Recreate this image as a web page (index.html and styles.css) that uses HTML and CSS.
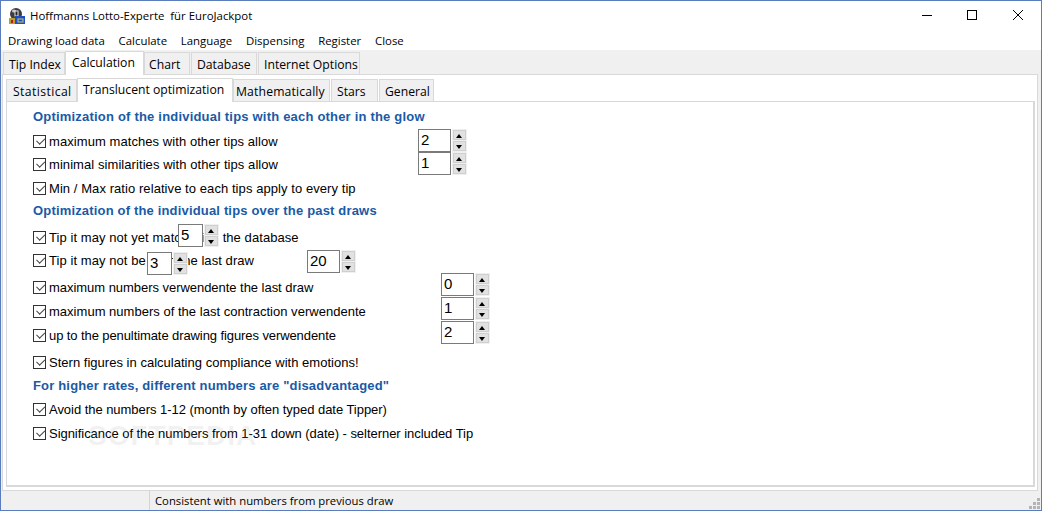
FILE: index.html
```html
<!DOCTYPE html>
<html lang="en">
<head>
<meta charset="utf-8">
<title>Hoffmanns Lotto-Experte für EuroJackpot</title>
<link rel="stylesheet" href="styles.css">
</head>
<body>
<div class="window">
  <header class="titlebar">
    <svg class="app-icon" width="16" height="16" viewBox="0 0 16 16">
      <circle cx="7" cy="6" r="6" fill="#3c3c44"/>
      <ellipse cx="5" cy="3" rx="2" ry="1.5" fill="#c8c8c8"/>
      <rect x="5.5" y="2.5" width="4" height="6" fill="#e8e8e8"/>
      <rect x="6.5" y="3.5" width="2" height="4" fill="#222"/>
      <rect x="0" y="10" width="7" height="6" fill="#b8a030"/>
      <rect x="2" y="12" width="2" height="3" fill="#b02020"/>
      <rect x="6" y="8" width="10" height="8" fill="#1c4fc8"/>
      <rect x="9" y="11" width="5" height="3" fill="none" stroke="#d8c850"/>
    </svg>
    <span class="title">Hoffmanns Lotto-Experte&nbsp; für EuroJackpot</span>
    <div class="caption-buttons">
      <svg width="10" height="10" viewBox="0 0 10 10"><path d="M0 5.5H10" stroke="#000"/></svg>
      <svg width="10" height="10" viewBox="0 0 10 10"><rect x=".5" y=".5" width="9" height="9" fill="none" stroke="#000"/></svg>
      <svg class="close-icon" width="10" height="10" viewBox="0 0 10 10"><path d="M0 0L10 10M10 0L0 10" stroke="#000" stroke-width="1"/></svg>
    </div>
  </header>
  <nav class="menu">
    <span>Drawing load data</span><span>Calculate</span><span>Language</span><span>Dispensing</span><span>Register</span><span>Close</span>
  </nav>
  <div class="client">
    <div class="tabs outer-tabs">
      <span class="tab t-index">Tip Index</span>
      <span class="tab active t-calc">Calculation</span>
      <span class="tab t-chart">Chart</span>
      <span class="tab t-db">Database</span>
      <span class="tab t-net">Internet Options</span>
    </div>
    <div class="page">
      <div class="tabs inner-tabs">
        <span class="tab t-stat">Statistical</span>
        <span class="tab active t-trans">Translucent optimization</span>
        <span class="tab t-math">Mathematically</span>
        <span class="tab t-stars">Stars</span>
        <span class="tab t-gen">General</span>
      </div>
      <main class="panel">
        <div class="watermark">SOFTPEDIA</div>
        <h2 class="heading first">Optimization of the individual tips with each other in the glow</h2>
        <label class="row g4 loose"><span class="check"></span>maximum matches with other tips allow</label>
        <label class="row g3 loose"><span class="check"></span>minimal similarities with other tips allow</label>
        <label class="row g4 loose"><span class="check"></span>Min / Max ratio relative to each tips apply to every tip</label>
        <h2 class="heading g3">Optimization of the individual tips over the past draws</h2>
        <label class="row g6 loose"><span class="check"></span>Tip it may not yet match with&nbsp; the database</label>
        <label class="row g3 loose"><span class="check"></span>Tip it may not be from the last draw</label>
        <label class="row g7 tight"><span class="check"></span>maximum numbers verwendente the last draw</label>
        <label class="row g4"><span class="check"></span>maximum numbers of the last contraction verwendente</label>
        <label class="row g4 tighter"><span class="check"></span>up to the penultimate drawing figures verwendente</label>
        <label class="row g7"><span class="check"></span>Stern figures in calculating compliance with emotions!</label>
        <h2 class="heading g4">For higher rates, different numbers are "disadvantaged"</h2>
        <label class="row g3 tight"><span class="check"></span>Avoid the numbers 1-12 (month by often typed date Tipper)</label>
        <label class="row g4 tight"><span class="check"></span>Significance of the numbers from 1-31 down (date) - selterner included Tip</label>

        <div class="spin wide s1"><span class="value">2</span><span class="arrows"><i class="up"></i><i class="down"></i></span></div>
        <div class="spin wide s2"><span class="value">1</span><span class="arrows"><i class="up"></i><i class="down"></i></span></div>
        <div class="spin s3"><span class="value">5</span><span class="arrows"><i class="up"></i><i class="down"></i></span></div>
        <div class="spin s4"><span class="value">3</span><span class="arrows"><i class="up"></i><i class="down"></i></span></div>
        <div class="spin wide s5"><span class="value">20</span><span class="arrows"><i class="up"></i><i class="down"></i></span></div>
        <div class="spin wide s6"><span class="value">0</span><span class="arrows"><i class="up"></i><i class="down"></i></span></div>
        <div class="spin wide s7"><span class="value">1</span><span class="arrows"><i class="up"></i><i class="down"></i></span></div>
        <div class="spin wide s8"><span class="value">2</span><span class="arrows"><i class="up"></i><i class="down"></i></span></div>
      </main>
    </div>
    <footer class="status">
      <span class="status-left"></span>
      <span class="status-text">Consistent with numbers from previous draw</span>
      <svg class="grip" width="12" height="12" viewBox="0 0 12 12" fill="#b4b4b4">
        <rect x="8" y="0" width="3" height="3"/><rect x="4" y="4" width="3" height="3"/><rect x="8" y="4" width="3" height="3"/>
        <rect x="0" y="8" width="3" height="3"/><rect x="4" y="8" width="3" height="3"/><rect x="8" y="8" width="3" height="3"/>
      </svg>
    </footer>
  </div>
</div>
</body>
</html>
```

FILE: styles.css
```css
* { box-sizing: border-box; }
html, body { margin: 0; padding: 0; }
body { width: 1042px; height: 511px; overflow: hidden; background: #fff; color: #000; font-family: "Open Sans", "Noto Sans", sans-serif; }

.window { width: 1042px; height: 511px; border: 1px solid #5b7dbd; display: flex; flex-direction: column; }

.titlebar { height: 29px; display: flex; align-items: center; padding-left: 8px; background: #fff; flex: none; }
.app-icon { flex: none; margin-right: 5px; }
.title { font: 11.4px "Open Sans", sans-serif; }
.caption-buttons { margin-left: auto; margin-right: 18px; margin-bottom: 1px; display: flex; gap: 35px; }
.caption-buttons svg { display: block; }
.caption-buttons .close-icon { margin-left: 1px; }

.menu { height: 20px; display: flex; gap: 13.8px; align-items: center; padding-left: 7px; font: 11.4px "Open Sans", sans-serif; background: #fff; flex: none; }

.client { flex: 1; min-height: 0; display: flex; flex-direction: column; background: #f0f0f0; }

.tabs { display: flex; align-items: flex-end; flex: none; }
.tab { height: 22px; display: flex; align-items: center; background: #f0f0f0; border: 1px solid #d9d9d9; border-bottom: none; font: 12.2px "Open Sans", sans-serif; margin-right: 1px; padding-top: 1px; white-space: nowrap; }
.tab.active { height: 24px; background: #fff; margin-right: 0; position: relative; top: 1px; z-index: 2; padding-top: 0; padding-bottom: 3px; }

.outer-tabs { height: 24px; padding-left: 2px; position: relative; }
.t-index { width: 62px; margin-right: 0; padding-left: 5px; }
.t-calc { width: 79px; padding-left: 6px; }
.t-chart { width: 46px; padding-left: 4px; }
.t-db { width: 66px; padding-left: 5px; }
.t-net { width: 102px; padding-left: 5px; }

.page { flex: 1; min-height: 0; margin: 0 3px 0 1px; padding: 3px 2px 3px 3px; background: #fff; border: 1px solid #d9d9d9; display: flex; flex-direction: column; }

.inner-tabs { height: 23px; padding-left: 0; position: relative; }
.t-stat { width: 71px; margin-right: 0; padding-left: 6px; letter-spacing: .4px; }
.t-trans { width: 156px; padding-left: 5px; }
.t-math { width: 97px; padding-left: 2px; letter-spacing: .15px; }
.t-stars { width: 47px; padding-left: 5px; }
.t-gen { width: 55px; padding-left: 5px; }

.panel { flex: 1; min-height: 0; position: relative; background: #fff; border: 1px solid #d9d9d9; border-width: 1px 2px 2px 1px; padding: 5px 0 0 26px; font: 13px "Liberation Sans", Arial, sans-serif; overflow: hidden; }

.heading { margin: 0; height: 20px; font: bold 13px/20px "Liberation Sans", Arial, sans-serif; letter-spacing: .17px; color: #1a5aa6; }
.heading.first { letter-spacing: .2px; }
.row { display: flex; align-items: center; height: 20px; white-space: nowrap; letter-spacing: .02px; }
.row.loose { letter-spacing: .07px; }
.row.tight { letter-spacing: -.04px; }
.row.tighter { letter-spacing: -.09px; }
.g3 { margin-top: 3px; }
.g4 { margin-top: 4px; }
.g6 { margin-top: 6px; }
.g7 { margin-top: 7px; }

.check { width: 13px; height: 13px; border: 1px solid #333; margin-right: 3px; flex: none; position: relative; background: #fff; }
.check::after { content: ""; position: absolute; left: 2px; top: 1px; width: 7px; height: 4px; border-left: 1px solid #444; border-bottom: 1px solid #444; transform: rotate(-45deg) translate(0, 1px); }

.spin { position: absolute; display: flex; height: 23px; z-index: 3; }
.spin .value { width: 25px; height: 23px; background: #fff; border: 1px solid #7a7a7a; padding-left: 2px; font: 15px/20px "Liberation Sans", Arial, sans-serif; display: block; }
.spin.wide .value { width: 33px; }
.arrows { width: 15px; margin-left: 1px; padding: 1px; background: #f0f0f0; display: flex; flex-direction: column; gap: 1px; }
.arrows i { flex: 1; background: #e1e1e1; border: 1px solid #cfcfcf; position: relative; display: block; }
.arrows i::after { content: ""; position: absolute; left: 2px; border-left: 3.5px solid transparent; border-right: 3.5px solid transparent; }
.arrows .up::after { top: 3px; border-bottom: 4px solid #000; }
.arrows .down::after { top: 3px; border-top: 4px solid #000; }

.s1 { left: 411px; top: 27px; }
.s2 { left: 411px; top: 50px; }
.s3 { left: 171px; top: 122px; }
.s4 { left: 140px; top: 150px; }
.s5 { left: 300px; top: 148px; }
.s6 { left: 434px; top: 171px; }
.s7 { left: 434px; top: 195px; }
.s8 { left: 434px; top: 219px; }

.watermark { position: absolute; left: 81px; top: 318px; font: bold 28px "Liberation Sans", Arial, sans-serif; letter-spacing: 1px; color: rgba(170, 170, 170, .16); }

.status { height: 19px; display: flex; align-items: center; position: relative; flex: none; font: 11.3px "Open Sans", sans-serif; }
.status-left { width: 149px; height: 100%; border-right: 1px solid #d4d4d4; }
.status-text { padding-left: 5px; }
.grip { position: absolute; right: 0; bottom: 0; }
```
